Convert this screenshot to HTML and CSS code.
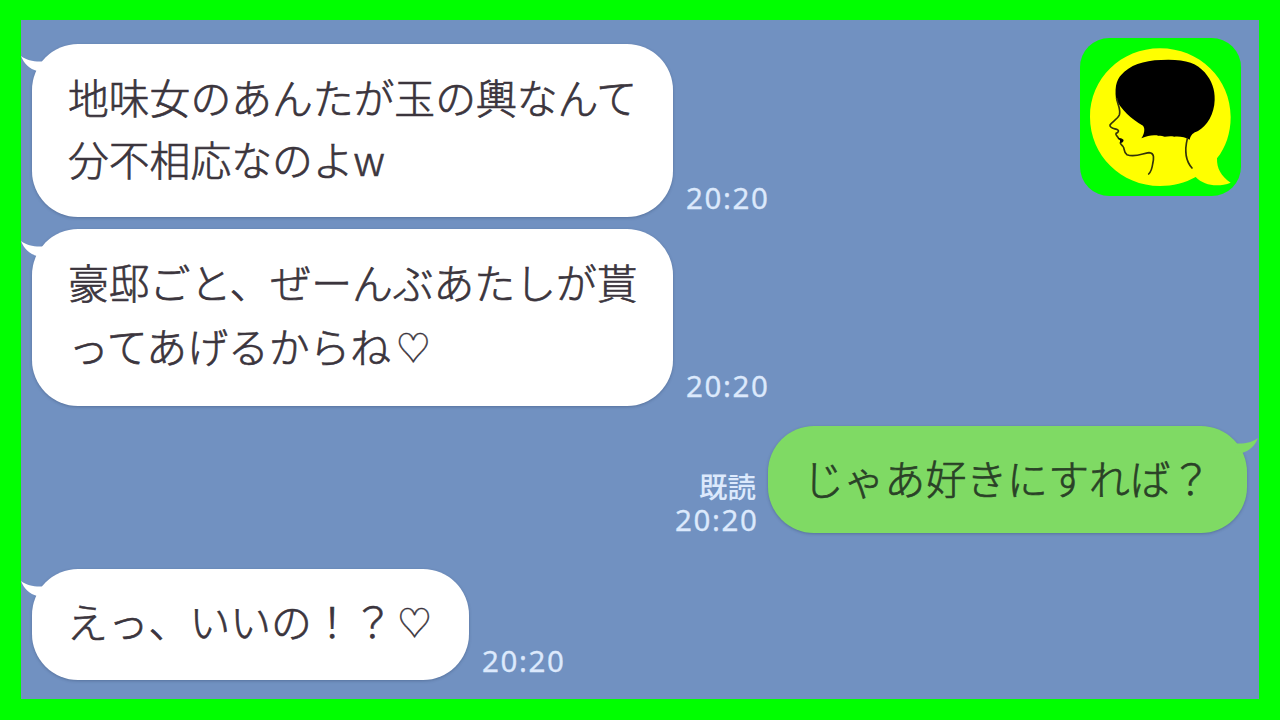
FILE: index.html
```html
<!DOCTYPE html>
<html lang="ja">
<head>
<meta charset="utf-8">
<title>トーク</title>
<link rel="stylesheet" href="styles.css">
</head>
<body>
<main class="chat">
  <section class="messages">
    <div class="row first">
      <div class="bubble"><svg class="tail" viewBox="0 0 24 18"><path d="M0 0C6 4.500 13 6 22 5.500L24 14L16 15C9 13 3 8 0 0Z"/></svg><p>地味女のあんたが玉の輿なんて<br>分不相応なのよw</p></div>
      <div class="meta"><time>20:20</time></div>
    </div>
    <div class="row second">
      <div class="bubble"><svg class="tail" viewBox="0 0 24 18"><path d="M0 0C6 4.500 13 6 22 5.500L24 14L16 15C9 13 3 8 0 0Z"/></svg><p>豪邸ごと、ぜーんぶあたしが貰<br>ってあげるからね<span class="heart">♡</span></p></div>
      <div class="meta"><time>20:20</time></div>
    </div>
    <div class="row sent">
      <div class="meta"><span class="read">既読</span><time>20:20</time></div>
      <div class="bubble"><svg class="tail" viewBox="0 0 24 18"><path d="M0 0C6 4.500 13 6 22 5.500L24 14L16 15C9 13 3 8 0 0Z"/></svg><p>じゃあ好きにすれば？</p></div>
    </div>
    <div class="row last">
      <div class="bubble"><svg class="tail" viewBox="0 0 24 18"><path d="M0 0C6 4.500 13 6 22 5.500L24 14L16 15C9 13 3 8 0 0Z"/></svg><p>えっ、いいの！？<span class="heart">♡</span></p></div>
      <div class="meta"><time>20:20</time></div>
    </div>
  </section>
  <svg class="logo" viewBox="30 38 483 474">
    <rect x="30" y="38" width="483" height="474" rx="88" fill="#0f0"/>
    <path d="M270 69C388 69 482 160 482 275C482 323 467 367 441 399C440 429 453 453 482 472C444 487 402 481 377 455C345 473 309 482 270 482C153 482 60 390 60 275C60 160 153 69 270 69Z" fill="#ff0"/>
    <path d="M138 222C133 176 142 158 163 139C194 112 236 103 295 103C350 103 382 115 404 141C425 166 435 192 434 224C433 266 411 302 384 317C370 322 362 328 359 343C345 335 331 333 313 334C302 331 292 333 284 334C273 331 265 333 260 330C245 328 232 332 214 339C223 325 226 310 219 301C182 281 154 253 138 222Z"/>
    <g fill="none" stroke="#33330a" stroke-width="5" stroke-linecap="round" stroke-linejoin="round">
      <path d="M140 220C143 239 153 251 148 269C143 281 126 289 120 299C118 308 130 309 140 312C149 316 145 322 138 324C135 330 145 334 146 340C157 342 161 344 156 349C147 352 152 356 158 362C166 370 159 381 171 388C195 397 218 384 237 382C255 383 251 402 248 416C246 431 242 440 236 446"/>
      <path d="M352 340C343 377 347 407 366 428"/>
    </g>
    <path d="M142 337L160 343Q160 352 149 352Q154 345 142 337Z"/>
  </svg>
</main>
</body>
</html>
```
FILE: styles.css
```css
* { box-sizing: border-box; }

body {
  margin: 0;
  font-family: "Noto Sans", "Noto Sans CJK JP", sans-serif;
}

.chat {
  display: flex;
  justify-content: space-between;
  align-items: flex-start;
  width: 1280px;
  height: 720px;
  overflow: hidden;
  border: solid #0f0;
  border-width: 20px 21px 21px 21px;
  background: #7191c1;
  position: relative;
}

.messages {
  display: flex;
  flex-direction: column;
  width: 1226px;
  flex: none;
  padding: 24px 0 0 11px;
}

.row { display: flex; align-items: flex-end; gap: 13px; }
.second { margin-top: 12px; }
.sent { margin-top: 20px; justify-content: flex-end; gap: 12px; }
.last { margin-top: 36px; }

.bubble {
  position: relative;
  flex: none;
  width: 641px;
  height: 173px;
  padding: 22px 0 0 36px;
  border-radius: 46px;
  background: #fff;
  color: #3b353d;
  box-shadow: 0 1px 3px rgba(50, 70, 105, .4);
}
.second .bubble { height: 177px; padding-top: 21px; }
.sent .bubble { width: 479px; height: 107px; background: #7fda64; color: #2a4127; padding: 21px 0 0 35px; }
.last .bubble { width: 437px; height: 111px; padding: 21px 0 0 35px; }

.bubble p {
  margin: 0;
  font-family: "Noto Sans CJK JP", sans-serif;
  font-weight: 300;
  font-size: 40.8px;
  line-height: 62px;
  white-space: nowrap;
  -webkit-text-stroke: .7px currentColor;
}
.second p { line-height: 64px; }

.heart {
  display: inline-block;
  width: 41px;
  padding-left: 5px;
  font-size: 34px;
  line-height: 40px;
  vertical-align: 2px;
  -webkit-text-stroke: .4px currentColor;
}
.last .heart { padding-left: 4px; }

.tail {
  position: absolute;
  left: -11px;
  top: 12px;
  width: 24px;
  height: 18px;
  fill: #fff;
}
.sent .tail { left: auto; right: -11px; transform: scaleX(-1); fill: #7fda64; }

.meta {
  display: flex;
  flex-direction: column;
  align-items: flex-end;
  color: #dce9fc;
  font-size: 29.5px;
  line-height: 34px;
}
.first .meta, .last .meta { padding-bottom: 2px; }
.second .meta { padding-bottom: 3px; }
.sent .meta { height: 64px; }
time { letter-spacing: 1.6px; margin-right: -1px; -webkit-text-stroke: .3px currentColor; }
.sent time { margin-right: -2.5px; }
.read { font-family: "Noto Sans CJK JP", sans-serif; font-size: 28.5px; font-weight: 500; }

.logo {
  position: absolute;
  left: 1059px;
  top: 18px;
  width: 161px;
  height: 158px;
}
```
